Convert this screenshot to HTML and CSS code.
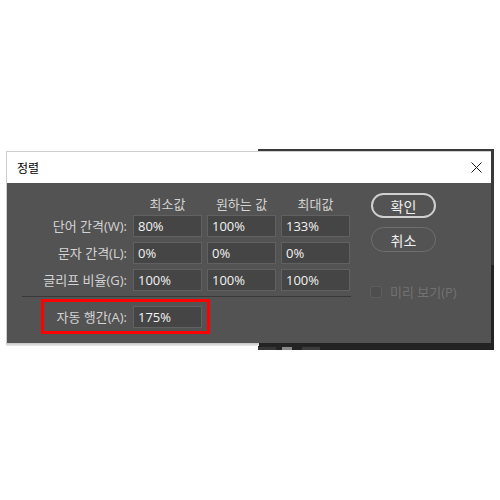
FILE: index.html
```html
<!DOCTYPE html>
<html lang="ko">
<head>
<meta charset="utf-8">
<title>정렬</title>
<link rel="stylesheet" href="styles.css">
</head>
<body>
<div class="stage">
  <div class="backwin"><span class="bit b1"></span><span class="bit b2"></span><span class="bit b3"></span></div>
  <div class="dialog">
    <div class="titlebar">
      <span class="title">정렬</span>
      <svg class="close" width="11" height="11" viewBox="0 0 11 11"><path d="M0.5 0.5L10.5 10.5M10.5 0.5L0.5 10.5" stroke="#1a1a1a" stroke-width="1" fill="none"/></svg>
    </div>
    <div class="body">
      <div class="form">
        <div class="row head">
          <span class="label"></span>
          <span class="col">최소값</span>
          <span class="col">원하는 값</span>
          <span class="col">최대값</span>
        </div>
        <div class="row">
          <span class="label">단어 간격(W):</span>
          <span class="field">80%</span>
          <span class="field">100%</span>
          <span class="field">133%</span>
        </div>
        <div class="row">
          <span class="label">문자 간격(L):</span>
          <span class="field">0%</span>
          <span class="field">0%</span>
          <span class="field">0%</span>
        </div>
        <div class="row">
          <span class="label">글리프 비율(G):</span>
          <span class="field">100%</span>
          <span class="field">100%</span>
          <span class="field">100%</span>
        </div>
        <div class="sep"></div>
        <div class="row auto">
          <span class="label">자동 행간(A):</span>
          <span class="field">175%</span>
          <div class="highlight"></div>
        </div>
      </div>
      <div class="actions">
        <button class="btn primary">확인</button>
        <button class="btn">취소</button>
        <div class="preview"><span class="check"></span><span class="plabel">미리 보기(P)</span></div>
      </div>
    </div>
    <div class="shadow"></div>
  </div>
</div>
</body>
</html>
```
FILE: styles.css
```css
* { box-sizing: border-box; }
html, body { margin: 0; padding: 0; background: #ffffff; }
.stage {
  position: relative;
  width: 500px;
  height: 500px;
  padding: 151px 0 0 6px;
  background: #ffffff;
  font-family: "Open Sans", "Noto Sans CJK KR", sans-serif;
}
.backwin {
  position: absolute;
  left: 258px;
  top: 149px;
  width: 236px;
  height: 201px;
  background: linear-gradient(to bottom, #3a3a3a 0, #3a3a3a 116px, #232323 116px, #232323 100%);
}
.bit { position: absolute; bottom: 0; height: 3px; }
.b1 { left: 0; width: 18px; background: #363636; }
.b2 { left: 24px; width: 10px; background: #8a8a8a; }
.b3 { left: 44px; width: 18px; background: #3c3c3c; }
.dialog {
  position: relative;
  z-index: 1;
  width: 485px;
  border-top: 1px solid #cfcfcf;
  border-left: 1px solid #cfcfcf;
  background: #535353;
}
.shadow {
  position: absolute;
  left: -1px;
  bottom: -3px;
  width: 253px;
  height: 3px;
  background: linear-gradient(to bottom, #c4c4c4, #ededed);
}
.titlebar {
  height: 31px;
  background: #ffffff;
  display: flex;
  align-items: center;
  justify-content: space-between;
  padding: 0 9px 0 10px;
}
.title {
  font-family: "Noto Sans CJK KR", sans-serif;
  font-size: 12px;
  color: #000000;
  line-height: 16px;
}
.close { display: block; }
.body {
  display: flex;
  align-items: flex-start;
  padding: 10px 0 15px 15px;
}
.form { width: 329px; }
.row {
  display: flex;
  gap: 5px;
  height: 22px;
  margin-bottom: 5px;
  font-size: 13px;
}
.row.head { margin-bottom: 0; }
.label {
  width: 106px;
  padding-right: 1px;
  text-align: right;
  line-height: 22px;
  color: #d4d4d4;
  white-space: nowrap;
}
.col {
  width: 69px;
  text-align: center;
  line-height: 22px;
  color: #d4d4d4;
  white-space: nowrap;
}
.field {
  width: 69px;
  height: 22px;
  border: 1px solid #616161;
  background: #454545;
  padding-left: 4px;
  line-height: 20px;
  color: #f2f2f2;
}
.sep {
  height: 1px;
  background: #393939;
  margin: 4px 0 9px;
}
.row.auto {
  position: relative;
  margin-bottom: 0;
}
.highlight {
  position: absolute;
  left: 19px;
  top: -7px;
  width: 169px;
  height: 35px;
  border: 3px solid #ff0000;
}
.actions {
  margin-left: 20px;
  display: flex;
  flex-direction: column;
  align-items: flex-start;
}
.btn {
  width: 65px;
  height: 25px;
  border-radius: 13px;
  background: transparent;
  color: #f0f0f0;
  font-family: "Noto Sans CJK KR", sans-serif;
  font-size: 14px;
  line-height: 20px;
  padding: 0;
  margin: 0;
  border: 1.5px solid #6f6f6f;
}
.btn.primary {
  border: 2px solid #d0d0d0;
  margin-bottom: 9px;
}
.preview {
  margin-top: 34px;
  display: flex;
  align-items: center;
  margin-left: -1px;
  height: 12px;
}
.check {
  width: 12px;
  height: 12px;
  border: 1px solid #5e5e5e;
  border-radius: 2px;
  background: #4e4e4e;
}
.plabel {
  margin-left: 8px;
  font-size: 13px;
  color: #727272;
  line-height: 12px;
  white-space: nowrap;
}
```
